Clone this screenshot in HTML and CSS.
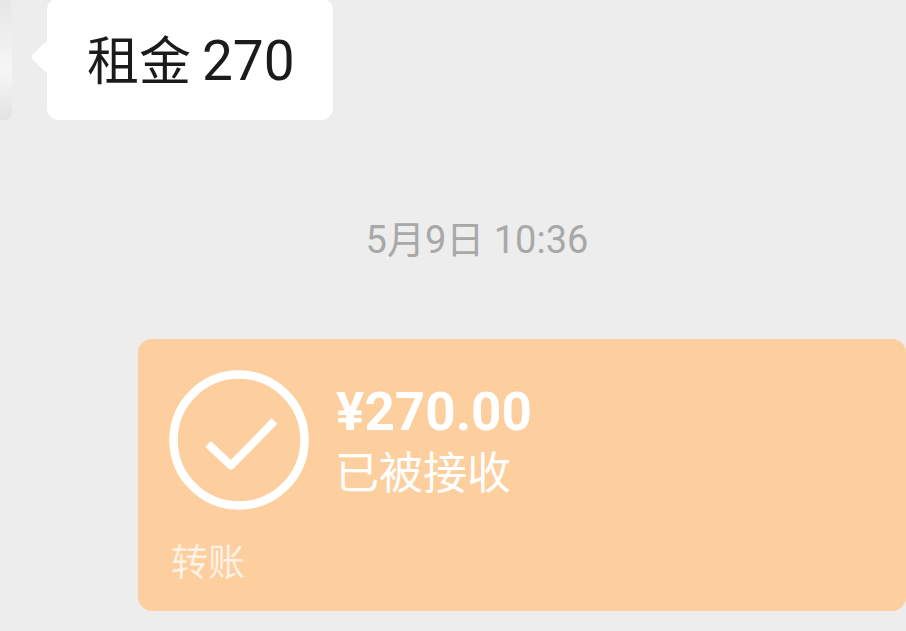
FILE: index.html
```html
<!DOCTYPE html>
<html lang="zh-CN">
<head>
	<meta charset="UTF-8">
	<title>转账</title>
	<link rel="stylesheet" href="styles.css">
</head>
<body>
	<div class="msg-row">
		<div class="avatar"></div>
		<div class="bubble">租金 <span class="num">270</span></div>
	</div>
	<div class="time">5月9日 10:36</div>
	<div class="transfer">
		<div class="transfer-main">
			<svg class="check" width="140" height="140" viewBox="0 0 140 140">
				<circle cx="70" cy="70" r="65.5" fill="none" stroke="#fff" stroke-width="8.5"/>
				<path d="M39 74 L62 95.5 L105.5 51" fill="none" stroke="#fff" stroke-width="8" stroke-linejoin="round"/>
			</svg>
			<div class="transfer-info">
				<div class="amount">¥270.00</div>
				<div class="status">已被接收</div>
			</div>
		</div>
		<div class="transfer-label">转账</div>
	</div>
</body>
</html>
```

FILE: styles.css
```css
html, body {
	height: 100%;
}
body {
	margin: 0;
	overflow: hidden;
	background: #ededed;
	font-family: Roboto, "Noto Sans CJK SC", sans-serif;
}
.msg-row {
	display: flex;
	height: 122px;
	margin-top: -2px;
}
.avatar {
	width: 12px;
	margin-right: 35px;
	border-radius: 0 8px 8px 0;
	background: linear-gradient(#e6e6e6, #f6f6f6 60%, #e2e2e2);
}
.bubble {
	position: relative;
	width: 286px;
	box-sizing: border-box;
	padding-left: 40px;
	border-radius: 12px;
	background: #fff;
	color: #1b1b1b;
	font-size: 52px;
	line-height: 126px;
}
.bubble::before {
	content: "";
	position: absolute;
	left: -12px;
	top: 48px;
	width: 22px;
	height: 22px;
	border-radius: 3px;
	background: #fff;
	transform: rotate(45deg);
}
.num {
	margin-left: -2px;
	font-size: 55px;
}
.time {
	margin-top: 96px;
	padding-left: 48px;
	text-align: center;
	color: #a8a8a8;
	font-size: 38px;
	line-height: 48px;
}
.transfer {
	width: 768px;
	height: 272px;
	box-sizing: border-box;
	margin: 75px 0 0 138px;
	padding: 31px 0 0 31px;
	border-radius: 14px;
	background: #fdce9e;
	color: #fff;
}
.transfer-main {
	display: flex;
	gap: 27px;
}
.check {
	display: block;
	flex: none;
}
.transfer-info {
	padding-top: 11px;
}
.amount {
	font-size: 53px;
	font-weight: 700;
	line-height: 62px;
}
.status {
	margin-left: -1px;
	font-size: 44px;
	line-height: 62px;
}
.transfer-label {
	margin-top: 30px;
	padding-left: 2px;
	color: rgba(255, 255, 255, 0.75);
	font-size: 37px;
	line-height: 48px;
}
```
